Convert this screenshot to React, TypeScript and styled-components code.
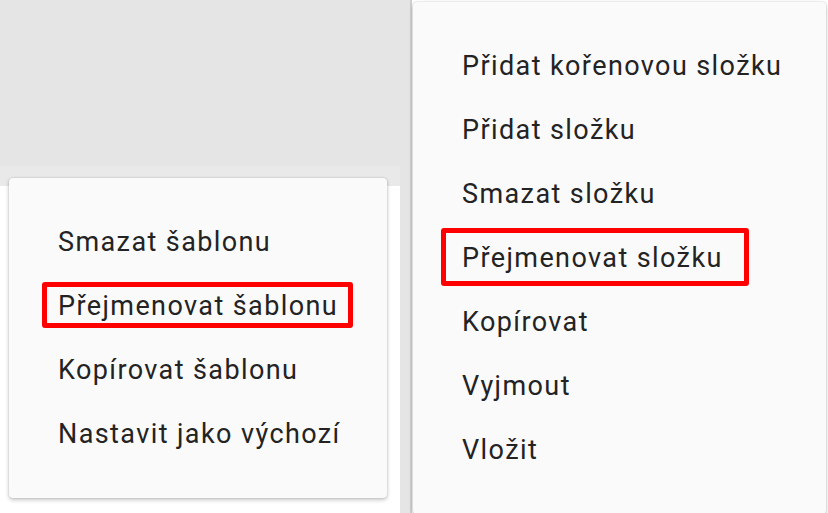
import React from "react";
import styled, { createGlobalStyle } from "styled-components";

const Global = createGlobalStyle`
  html, body { margin: 0; padding: 0; background: #ffffff; }
  body { font-family: Roboto, "Noto Sans", "Liberation Sans", sans-serif; }
`;

const Page = styled.div`
  position: relative;
  width: 828px;
  height: 513px;
  overflow: hidden;
  display: flex;
  background: #ffffff;
`;

const LeftPane = styled.div`
  width: 400px;
  display: flex;
  flex-direction: column;
`;

const GrayHeader = styled.div`
  height: 166px;
  background: #e5e5e5;
`;

const Band = styled.div`
  height: 20px;
  background: #e9e9e9;
`;

const WhiteArea = styled.div`
  flex: 1;
  background: #ffffff;
`;

const Divider = styled.div`
  width: 10px;
  background: #e5e5e5;
  border-right: 2px solid #cfcfcf;
`;

const RightPane = styled.div`
  flex: 1;
  background: #ffffff;
`;

const Menu = styled.ul<{ $left: number; $top: number; $width: number; $height: number }>`
  position: absolute;
  left: ${(p) => p.$left}px;
  top: ${(p) => p.$top}px;
  width: ${(p) => p.$width}px;
  height: ${(p) => p.$height}px;
  box-sizing: border-box;
  margin: 0;
  padding: 32px 0;
  list-style: none;
  background: #fafafa;
  border-radius: 4px;
  box-shadow: 0 2px 4px rgba(0, 0, 0, 0.22), 0 0 2px rgba(0, 0, 0, 0.18);
`;

type Box = { left: number; top: number; width: number; height: number };

const Item = styled.li<{ $box?: Box }>`
  position: relative;
  height: 64px;
  display: flex;
  align-items: center;
  padding-left: 49px;
  font-size: 27px;
  letter-spacing: 1.4px;
  color: #232323;
  white-space: nowrap;
  ${(p) =>
    p.$box
      ? `
    &::after {
      content: "";
      position: absolute;
      left: ${p.$box.left}px;
      top: ${p.$box.top}px;
      width: ${p.$box.width}px;
      height: ${p.$box.height}px;
      box-sizing: border-box;
      border: 5px solid #ff0000;
      border-radius: 3px;
    }
  `
      : ""}
`;

const leftItems: { label: string; box?: Box }[] = [
  { label: "Smazat šablonu" },
  { label: "Přejmenovat šablonu", box: { left: 33, top: 8, width: 311, height: 46 } },
  { label: "Kopírovat šablonu" },
  { label: "Nastavit jako výchozí" },
];

const rightItems: { label: string; box?: Box }[] = [
  { label: "Přidat kořenovou složku" },
  { label: "Přidat složku" },
  { label: "Smazat složku" },
  { label: "Přejmenovat složku", box: { left: 28, top: 2, width: 308, height: 58 } },
  { label: "Kopírovat" },
  { label: "Vyjmout" },
  { label: "Vložit" },
];

export default function App() {
  return (
    <>
      <Global />
      <Page>
        <LeftPane>
          <GrayHeader />
          <Band />
          <WhiteArea />
        </LeftPane>
        <Divider />
        <RightPane />
        <Menu $left={9} $top={178} $width={378} $height={320}>
          {leftItems.map((it) => (
            <Item key={it.label} $box={it.box}>
              {it.label}
            </Item>
          ))}
        </Menu>
        <Menu $left={413} $top={2} $width={413} $height={512}>
          {rightItems.map((it) => (
            <Item key={it.label} $box={it.box}>
              {it.label}
            </Item>
          ))}
        </Menu>
      </Page>
    </>
  );
}
